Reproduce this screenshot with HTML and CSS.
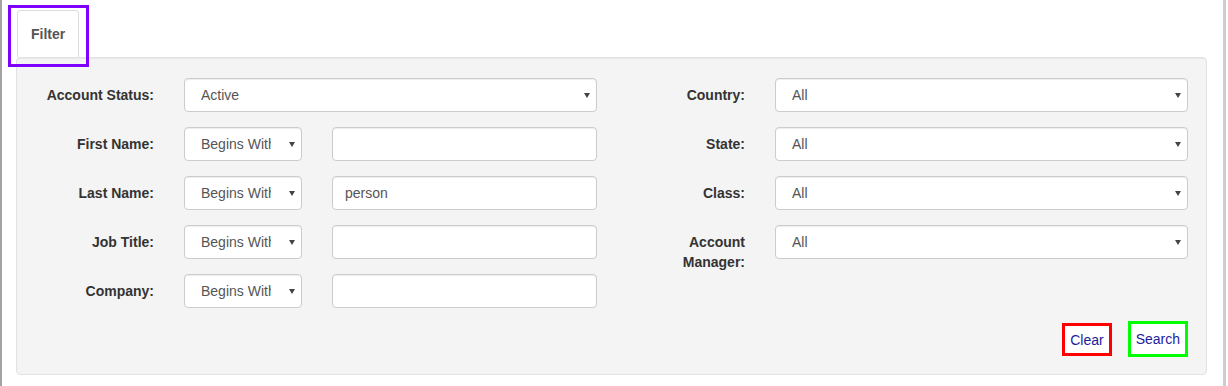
FILE: index.html
```html
<!DOCTYPE html>
<html>
<head>
  <title>Filter</title>
<link rel="stylesheet" href="styles.css">
</head>

<body>

<div class='page'>
  <ul class='tabs'>
    <li class='tab active'>Filter</li>
  </ul>
  <span class='mark mark-tab'></span>

  <form class='well'>
    <div class='columns'>
      <div class='half half-l'>
        <label class='control-label'>Account Status:</label>
        <div class='pick'>
          <select class='control'><option>Active</option></select>
        </div>

        <label class='control-label'>First Name:</label>
        <div class='pair'>
          <div class='pick pick-sm'><select class='control'><option>Begins With</option></select></div>
          <input class='control text' type='text' value=''>
        </div>

        <label class='control-label'>Last Name:</label>
        <div class='pair'>
          <div class='pick pick-sm'><select class='control'><option>Begins With</option></select></div>
          <input class='control text' type='text' value='person'>
        </div>

        <label class='control-label'>Job Title:</label>
        <div class='pair'>
          <div class='pick pick-sm'><select class='control'><option>Begins With</option></select></div>
          <input class='control text' type='text' value=''>
        </div>

        <label class='control-label'>Company:</label>
        <div class='pair'>
          <div class='pick pick-sm'><select class='control'><option>Begins With</option></select></div>
          <input class='control text' type='text' value=''>
        </div>
      </div>

      <div class='half half-r'>
        <label class='control-label'>Country:</label>
        <div class='pick'><select class='control'><option>All</option></select></div>

        <label class='control-label'>State:</label>
        <div class='pick'><select class='control'><option>All</option></select></div>

        <label class='control-label'>Class:</label>
        <div class='pick'><select class='control'><option>All</option></select></div>

        <label class='control-label'>Account Manager:</label>
        <div class='pick'><select class='control'><option>All</option></select></div>
      </div>
    </div>

    <div class='actions'>
      <button type='button' class='btn-link btn-clear'>Clear</button>
      <button type='button' class='btn-link btn-search'>Search</button>
    </div>
  </form>
</div>

</body>
</html>
```

FILE: styles.css
```css
html, body {
  background: #fff;
  margin: 0;
}
body {
  font-family: 'Liberation Sans', Arial, sans-serif;
  font-size: 14px;
  line-height: 20px;
  color: #333;
}
.page {
  position: relative;
  width: 1226px;
  height: 386px;
  box-sizing: border-box;
  border-left: 2px solid #a3a3a3;
  border-right: 3px solid #cdcdcd;
}
.tabs {
  list-style: none;
  margin: 0;
  padding: 10px 0 0 15px;
  display: flex;
}
.tab {
  padding: 13px 13px 13px;
  border: 1px solid #ddd;
  border-bottom: 0;
  border-radius: 4px 4px 0 0;
  background-color: #fff;
  color: #555;
  font-weight: bold;
}
.mark {
  position: absolute;
  border: 3px solid #7f00ff;
  box-sizing: border-box;
}
.mark-tab {
  left: 6px;
  top: 5px;
  width: 81px;
  height: 62px;
}
.well {
  margin: 0 16px 0 14px;
  padding: 20px 18px 17px;
  background-color: #f4f4f4;
  border: 1px solid #e3e3e3;
  border-radius: 4px;
  box-shadow: inset 0 1px 1px rgba(0,0,0,0.05);
}
.columns {
  display: flex;
  gap: 30px;
}
.half {
  display: grid;
  column-gap: 30px;
  row-gap: 15px;
  grid-auto-rows: 34px;
}
.half-l {
  grid-template-columns: 119px 413px;
}
.half-r {
  grid-template-columns: 118px 413px;
}
.control-label {
  padding-top: 7px;
  text-align: right;
  font-weight: bold;
  color: #333;
}
.pair {
  display: flex;
  gap: 30px;
}
.pick {
  position: relative;
  height: 34px;
}
.pick-sm {
  width: 118px;
  flex: none;
}
.pick::after {
  content: '';
  position: absolute;
  right: 7px;
  top: 15px;
  border-left: 3px solid transparent;
  border-right: 3px solid transparent;
  border-top: 5px solid #444;
  pointer-events: none;
}
.control {
  display: block;
  width: 100%;
  height: 34px;
  box-sizing: border-box;
  margin: 0;
  font-family: inherit;
  font-size: 14px;
  color: #555;
  background-color: #fff;
  border: 1px solid #ccc;
  border-radius: 4px;
  box-shadow: inset 0 1px 1px rgba(0,0,0,0.075);
}
select.control {
  -webkit-appearance: none;
  appearance: none;
  padding: 0 30px 0 16px;
  white-space: nowrap;
  overflow: hidden;
}
.text {
  flex: 1;
  padding: 6px 12px;
}
.actions {
  display: flex;
  justify-content: flex-end;
  align-items: center;
  gap: 16px;
  margin-top: 13px;
}
.btn-link {
  font-family: inherit;
  font-size: 14px;
  line-height: 20px;
  color: #1c1c9e;
  background-color: #fff;
  margin: 0;
  cursor: pointer;
}
.btn-clear {
  border: 3px solid #ff0000;
  padding: 4px 5px 3px;
}
.btn-search {
  border: 3px solid #00ff00;
  padding: 5px 5px 5px;
}
```
